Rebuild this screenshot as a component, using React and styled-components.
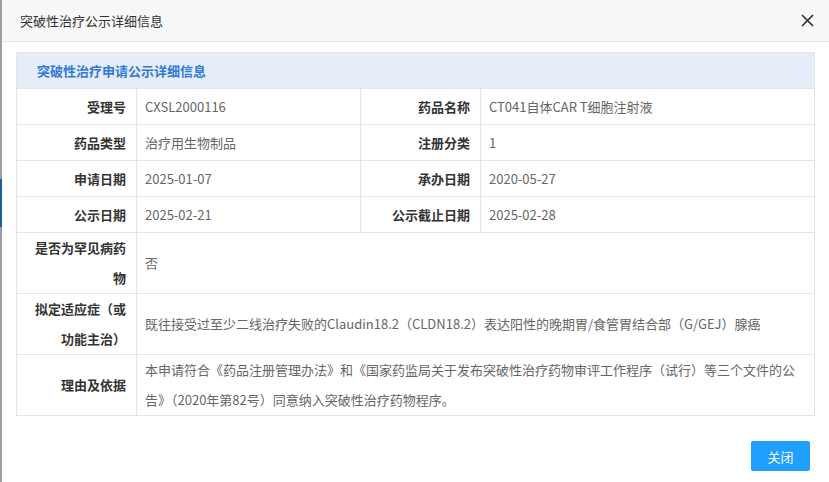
import React from "react";
import styled, { createGlobalStyle } from "styled-components";

const GlobalStyle = createGlobalStyle`
  html, body {
    margin: 0;
    padding: 0;
    background: #ffffff;
  }
  body {
    font-family: "Microsoft YaHei", "Noto Sans CJK SC", sans-serif;
  }
`;

const Page = styled.div`
  display: flex;
  width: 829px;
  height: 482px;
  overflow: hidden;
`;

// the page behind the modal peeks out on the left edge
const BackStrip = styled.div`
  width: 2px;
  display: flex;
  flex-direction: column;
`;

const StripPart = styled.div`
  height: ${(props) => props.h}px;
  background: ${(props) => (props.active ? "#1b5d9c" : "#9a9ea4")};
  flex: ${(props) => (props.grow ? 1 : "none")};
`;

const Modal = styled.div`
  flex: 1;
  display: flex;
  flex-direction: column;
  background: #fff;
`;

const Header = styled.div`
  height: 41px;
  display: flex;
  align-items: center;
  justify-content: space-between;
  padding: 0 14px 0 18px;
  background: #f8f8f8;
  border-bottom: 1px solid #e6e6e6;
`;

const Title = styled.div`
  font-size: 13px;
  color: #333;
`;

const CloseIcon = styled.button`
  border: none;
  background: none;
  padding: 0;
  width: 16px;
  height: 16px;
  display: flex;
  align-items: center;
  justify-content: center;
  cursor: pointer;
`;

const Body = styled.div`
  padding: 10px 12px 0 14px;
`;

const Table = styled.table`
  width: 799px;
  border-collapse: collapse;
  table-layout: fixed;
  font-size: 13px;
`;

const Caption = styled.td`
  height: 35px;
  background: #e7edf8;
  color: #2f7ad6;
  font-weight: bold;
  padding: 0 20px;
  border: 1px solid #e5e5e5;
`;

const Label = styled.td`
  height: 35px;
  line-height: 30px;
  padding: 0 10px;
  text-align: right;
  font-weight: bold;
  color: #333;
  border: 1px solid #e5e5e5;
  vertical-align: middle;
`;

const Value = styled.td`
  height: 35px;
  line-height: 30px;
  padding: 0 8px;
  color: #666;
  border: 1px solid #e5e5e5;
  vertical-align: middle;
`;

const Footer = styled.div`
  display: flex;
  justify-content: flex-end;
  padding: 25px 19px 0 0;
`;

const Button = styled.button`
  width: 59px;
  height: 30px;
  border: none;
  border-radius: 2px;
  background: #1fa0ff;
  color: #fff;
  font-size: 13px;
  font-family: inherit;
  cursor: pointer;
`;

const pairs = [
  ["受理号", "CXSL2000116", "药品名称", "CT041自体CAR T细胞注射液"],
  ["药品类型", "治疗用生物制品", "注册分类", "1"],
  ["申请日期", "2025-01-07", "承办日期", "2020-05-27"],
  ["公示日期", "2025-02-21", "公示截止日期", "2025-02-28"],
];

const wide = [
  ["是否为罕见病药物", "否"],
  ["拟定适应症（或功能主治）", "既往接受过至少二线治疗失败的Claudin18.2（CLDN18.2）表达阳性的晚期胃/食管胃结合部（G/GEJ）腺癌"],
  [
    "理由及依据",
    "本申请符合《药品注册管理办法》和《国家药监局关于发布突破性治疗药物审评工作程序（试行）等三个文件的公告》（2020年第82号）同意纳入突破性治疗药物程序。",
  ],
];

export default function App() {
  return (
    <>
      <GlobalStyle />
      <Page>
        <BackStrip>
          <StripPart h={179} />
          <StripPart h={48} active />
          <StripPart grow />
        </BackStrip>
        <Modal>
          <Header>
            <Title>突破性治疗公示详细信息</Title>
            <CloseIcon aria-label="close">
              <svg width="13" height="13" viewBox="0 0 13 13">
                <path d="M1 1 L12 12 M12 1 L1 12" stroke="#2b2b2b" strokeWidth="1.6" fill="none" />
              </svg>
            </CloseIcon>
          </Header>
          <Body>
            <Table>
              <colgroup>
                <col style={{ width: 120 }} />
                <col style={{ width: 224 }} />
                <col style={{ width: 120 }} />
                <col />
              </colgroup>
              <tbody>
                <tr>
                  <Caption colSpan={4}>突破性治疗申请公示详细信息</Caption>
                </tr>
                {pairs.map((p) => (
                  <tr key={p[0]}>
                    <Label>{p[0]}</Label>
                    <Value>{p[1]}</Value>
                    <Label>{p[2]}</Label>
                    <Value>{p[3]}</Value>
                  </tr>
                ))}
                {wide.map((w) => (
                  <tr key={w[0]}>
                    <Label>{w[0]}</Label>
                    <Value colSpan={3}>{w[1]}</Value>
                  </tr>
                ))}
              </tbody>
            </Table>
          </Body>
          <Footer>
            <Button>关闭</Button>
          </Footer>
        </Modal>
      </Page>
    </>
  );
}
